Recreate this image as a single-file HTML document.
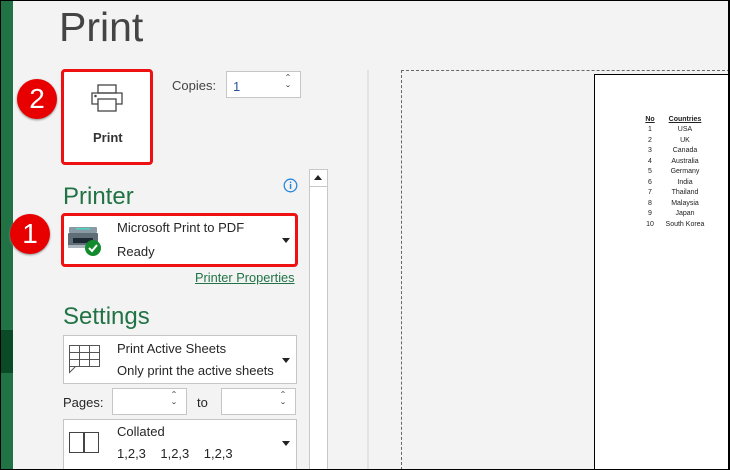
<!DOCTYPE html>
<html style="width:730px;height:470px;overflow:hidden"><head><style>
*{margin:0;padding:0;box-sizing:border-box}
body{width:730px;height:470px;overflow:hidden;background:#f3f3f3;font-family:"Liberation Sans",sans-serif;position:relative;color:#262626}
.a{position:absolute}
.box{position:absolute;background:#fff;border:1px solid #c6c6c6}
.red{position:absolute;border:3px solid #ee1111;border-radius:4px}
.badge{position:absolute;width:40px;height:40px;border-radius:50%;background:#e80000;color:#fff;font-size:28px;text-align:center;line-height:40px;box-shadow:0 1px 2px #888}
.green{color:#217346}
.t13{font-size:13px}
.tri{position:absolute;width:0;height:0;border-left:4px solid transparent;border-right:4px solid transparent;border-top:5px solid #222}
.spin{position:absolute;font-size:12px;color:#555;line-height:11px}
.pv td{font-size:7px;text-align:center;height:10.5px;color:#222}
</style></head><body>
<div class="a" style="left:0;top:0;width:730px;height:470px;border:1px solid #000;border-right:2px solid #000;z-index:9;pointer-events:none"></div>
<div class="a" style="left:0;top:0;width:13px;height:470px;background:#217346"></div>
<div class="a" style="left:0;top:330px;width:13px;height:43px;background:#0b4a26"></div>
<div class="a" style="left:59px;top:4px;font-size:41px;color:#444">Print</div>

<div class="a" style="left:62px;top:70px;width:90px;height:94px;background:#fff"></div>
<div class="red" style="left:61px;top:69px;width:92px;height:96px"></div>
<svg class="a" style="left:91px;top:84px" width="32" height="28" viewBox="0 0 32 28" fill="none" stroke="#444" stroke-width="1.3">
<rect x="7" y="1" width="18" height="8"/><path d="M7 20H1V9h30v11h-6"/><rect x="7" y="15" width="18" height="12"/><circle cx="4.5" cy="12" r=".6" fill="#444"/></svg>
<div class="a" style="left:93px;top:130px;font-size:13px;font-weight:bold;color:#333">Print</div>
<div class="badge" style="left:17px;top:79px">2</div>

<div class="a t13" style="left:172px;top:78px;color:#444">Copies:</div>
<div class="box" style="left:226px;top:71px;width:75px;height:27px"></div>
<div class="a t13" style="left:233px;top:79px;color:#2a5699">1</div>
<div class="spin" style="left:286px;top:74px">&#710;<br>&#711;</div>

<div class="a green" style="left:63px;top:183px;font-size:24px">Printer</div>
<svg class="a" style="left:283px;top:178px" width="15" height="15"><circle cx="7.5" cy="7.5" r="6.3" fill="none" stroke="#2b88d8" stroke-width="1.3"/><rect x="6.8" y="6" width="1.5" height="5" fill="#2b88d8"/><rect x="6.8" y="3.6" width="1.5" height="1.5" fill="#2b88d8"/></svg>

<div class="a" style="left:62px;top:214px;width:235px;height:52px;background:#fff"></div>
<div class="red" style="left:61px;top:213px;width:237px;height:54px"></div>
<svg class="a" style="left:67px;top:224px" width="38" height="34">
<rect x="2" y="3" width="28" height="6" rx="1" fill="#8a9aa5"/><rect x="9" y="4" width="14" height="1.5" fill="#4fd4c0"/><rect x="1" y="9" width="30" height="14" rx="1" fill="#5f6d77"/><rect x="6" y="14" width="20" height="5" fill="#1e2a33"/><rect x="1" y="21" width="30" height="3" fill="#aab4bb"/>
<circle cx="26" cy="24" r="8" fill="#138a2e"/><path d="M22 24l3 3 5-6" stroke="#fff" stroke-width="2" fill="none"/></svg>
<div class="a t13" style="left:117px;top:220px">Microsoft Print to PDF</div>
<div class="a t13" style="left:117px;top:244px">Ready</div>
<div class="tri" style="left:282px;top:238px"></div>
<div class="badge" style="left:10px;top:214px">1</div>
<div class="a green" style="left:195px;top:270px;font-size:12.8px;text-decoration:underline">Printer Properties</div>

<div class="a green" style="left:63px;top:303px;font-size:24px">Settings</div>
<div class="box" style="left:63px;top:335px;width:234px;height:49px"></div>
<svg class="a" style="left:68px;top:344px" width="34" height="30" fill="none" stroke="#555" stroke-width="1"><path d="M1.5 1.5h30v21h-24l-6 6z M1.5 8.5h30 M1.5 15.5h30 M11.5 1.5v21 M21.5 1.5v21 M1.5 28.5v-6h6"/></svg>
<div class="a t13" style="left:117px;top:341px">Print Active Sheets</div>
<div class="a t13" style="left:117px;top:363px">Only print the active sheets</div>
<div class="tri" style="left:282px;top:358px"></div>

<div class="a t13" style="left:63px;top:395px">Pages:</div>
<div class="box" style="left:112px;top:388px;width:75px;height:27px"></div>
<div class="spin" style="left:172px;top:391px">&#710;<br>&#711;</div>
<div class="a t13" style="left:197px;top:395px">to</div>
<div class="box" style="left:221px;top:388px;width:75px;height:27px"></div>
<div class="spin" style="left:281px;top:391px">&#710;<br>&#711;</div>

<div class="box" style="left:63px;top:419px;width:234px;height:51px"></div>
<svg class="a" style="left:68px;top:431px" width="34" height="24" fill="none" stroke="#444" stroke-width="1"><rect x="1.5" y="1.5" width="14" height="20"/><rect x="16.5" y="1.5" width="14" height="20"/></svg>
<div class="a t13" style="left:117px;top:424px">Collated</div>
<div class="a t13" style="left:117px;top:446px">1,2,3&nbsp;&nbsp;&nbsp;&nbsp;1,2,3&nbsp;&nbsp;&nbsp;&nbsp;1,2,3</div>
<div class="tri" style="left:282px;top:441px"></div>

<div class="a" style="left:309px;top:169px;width:19px;height:301px;background:#fff;border:1px solid #c8c8c8"></div>
<div class="a" style="left:310px;top:186px;width:17px;height:1px;background:#c8c8c8"></div>
<div class="a" style="left:314px;top:175px;width:0;height:0;border-left:4px solid transparent;border-right:4px solid transparent;border-bottom:5px solid #222"></div>
<div class="a" style="left:367px;top:70px;width:2px;height:400px;background:#e2e2e2"></div>

<div class="a" style="left:401px;top:70px;width:329px;height:400px;border-left:1px dashed #666;border-top:1px dashed #666"></div>
<div class="a" style="left:594px;top:74px;width:136px;height:396px;background:#fff;border-left:1px solid #000;border-top:1px solid #000"></div>
<table class="a pv" style="left:640px;top:114px;border-collapse:collapse">
<tr><td style="width:20px;text-decoration:underline;font-weight:bold">No</td><td style="width:50px;text-decoration:underline;font-weight:bold">Countries</td></tr>
<tr><td>1</td><td>USA</td></tr><tr><td>2</td><td>UK</td></tr><tr><td>3</td><td>Canada</td></tr><tr><td>4</td><td>Australia</td></tr><tr><td>5</td><td>Germany</td></tr><tr><td>6</td><td>India</td></tr><tr><td>7</td><td>Thailand</td></tr><tr><td>8</td><td>Malaysia</td></tr><tr><td>9</td><td>Japan</td></tr><tr><td>10</td><td>South Korea</td></tr>
</table>
</body></html>
